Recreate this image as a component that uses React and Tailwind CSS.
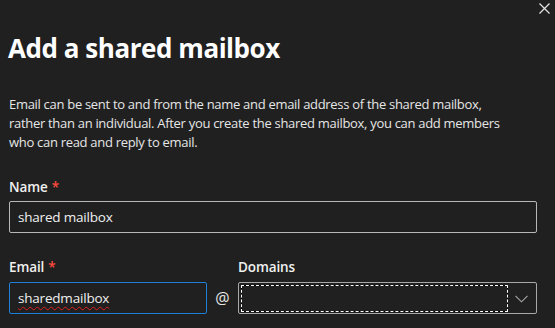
import React from 'react';

const CloseIcon = () => (
  <svg width="11" height="11" viewBox="0 0 11 11" className="text-[#e6e6e6]">
    <path d="M0.5 0.5 L10.5 10.5 M10.5 0.5 L0.5 10.5" stroke="currentColor" strokeWidth="1.2" fill="none" />
  </svg>
);

const Chevron = () => (
  <svg width="13" height="8" viewBox="0 0 13 8" className="text-[#a8a8a8]">
    <path d="M0.5 0.8 L6.5 6.8 L12.5 0.8" stroke="currentColor" strokeWidth="1.1" fill="none" />
  </svg>
);

const Label = ({ children, required }) => (
  <label className="block text-[13.5px] leading-5 font-semibold tracking-[-0.1px] text-[#f0f0f0]">
    {children}
    {required && <span className="ml-1 text-[#ff4b3e]">*</span>}
  </label>
);

export default function App() {
  return (
    <div className="w-[555px] h-[328px] overflow-hidden bg-[#202020] text-white font-['Open_Sans',sans-serif]">
      <div className="flex justify-end pt-[3px] pr-[5px] h-[30px]">
        <button type="button" aria-label="Close" className="h-[11px]">
          <CloseIcon />
        </button>
      </div>

      <div className="pl-[9px] pr-[18px]">
        <h1 className="text-[26px] leading-9 font-bold tracking-[-0.45px] text-white -ml-px">Add a shared mailbox</h1>

        <p className="mt-[29px] max-w-[506px] text-[13px] leading-[19px] text-[#e6e6e6] tracking-[-0.3px]">
          Email can be sent to and from the name and email address of the shared mailbox, rather than an individual. After you create the shared mailbox, you can add members who can read and reply to email.
        </p>

        <div className="mt-[25px]">
          <Label required>Name</Label>
          <div className="mt-1 h-8 border border-[#b8b8b8] rounded-[2px] flex items-center px-2 text-[13.5px] tracking-[-0.2px] text-[#f0f0f0]">
            shared mailbox
          </div>
        </div>

        <div className="mt-6 grid grid-cols-[198px_31px_299px] gap-y-[5px]">
          <Label required>Email</Label>
          <div />
          <Label>Domains</Label>

          <div className="h-8 border border-[#1f7fd6] rounded-[2px] flex items-center px-2 text-[13.5px] tracking-[-0.2px] text-[#f0f0f0]">
            <span className="underline decoration-wavy decoration-[#e0201b] decoration-1 underline-offset-[3px]">sharedmailbox</span>
          </div>
          <div className="flex items-center justify-center text-base text-[#e6e6e6]">@</div>
          <div className="h-8 border border-[#a8a8a8] rounded-[2px] flex items-center pl-[2px] pr-2">
            <div className="h-[27px] w-[267px] bg-black">
              <div className="h-full w-full border border-dashed border-white bg-[#202020] bg-clip-padding" />
            </div>
            <div className="ml-auto pt-[2px]">
              <Chevron />
            </div>
          </div>
        </div>
      </div>
    </div>
  );
}
